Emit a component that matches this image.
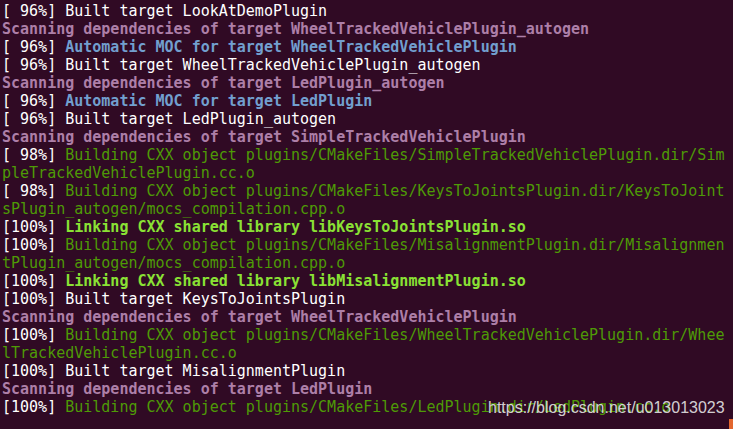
const W = "text-white";
const M = "text-[#ad7fa8] font-bold";
const B = "text-[#729fcf] font-bold";
const G = "text-[#4e9a06]";
const L = "text-[#8ae234] font-bold";

type Seg = [string, string];

const lines: Seg[][] = [
  [["[ 96%] Built target LookAtDemoPlugin", W]],
  [["Scanning dependencies of target WheelTrackedVehiclePlugin_autogen", M]],
  [["[ 96%] ", W], ["Automatic MOC for target WheelTrackedVehiclePlugin", B]],
  [["[ 96%] Built target WheelTrackedVehiclePlugin_autogen", W]],
  [["Scanning dependencies of target LedPlugin_autogen", M]],
  [["[ 96%] ", W], ["Automatic MOC for target LedPlugin", B]],
  [["[ 96%] Built target LedPlugin_autogen", W]],
  [["Scanning dependencies of target SimpleTrackedVehiclePlugin", M]],
  [["[ 98%] ", W], ["Building CXX object plugins/CMakeFiles/SimpleTrackedVehiclePlugin.dir/Sim", G]],
  [["pleTrackedVehiclePlugin.cc.o", G]],
  [["[ 98%] ", W], ["Building CXX object plugins/CMakeFiles/KeysToJointsPlugin.dir/KeysToJoint", G]],
  [["sPlugin_autogen/mocs_compilation.cpp.o", G]],
  [["[100%] ", W], ["Linking CXX shared library libKeysToJointsPlugin.so", L]],
  [["[100%] ", W], ["Building CXX object plugins/CMakeFiles/MisalignmentPlugin.dir/Misalignmen", G]],
  [["tPlugin_autogen/mocs_compilation.cpp.o", G]],
  [["[100%] ", W], ["Linking CXX shared library libMisalignmentPlugin.so", L]],
  [["[100%] Built target KeysToJointsPlugin", W]],
  [["Scanning dependencies of target WheelTrackedVehiclePlugin", M]],
  [["[100%] ", W], ["Building CXX object plugins/CMakeFiles/WheelTrackedVehiclePlugin.dir/Whee", G]],
  [["lTrackedVehiclePlugin.cc.o", G]],
  [["[100%] Built target MisalignmentPlugin", W]],
  [["Scanning dependencies of target LedPlugin", M]],
  [["[100%] ", W], ["Building CXX object plugins/CMakeFiles/LedPlugin.dir/LedPlugin.cc.o", G]],
];

export default function App() {
  return (
    <div className="relative w-[733px] h-[429px] overflow-hidden bg-[#300a24]">
      <div
        className="pt-[2px] pl-[2px] text-[15px] leading-[18px] whitespace-pre"
        style={{ fontFamily: '"DejaVu Sans Mono", monospace' }}
      >
        {lines.map((segs, i) => (
          <div key={i}>
            {segs.map(([t, c], j) => (
              <span key={j} className={c}>
                {t}
              </span>
            ))}
          </div>
        ))}
      </div>
      {/* csdn watermark */}
      <div
        className="absolute left-[488px] top-[398px] text-[16px] leading-[20px] text-[#e8e8e8]/90"
        style={{ fontFamily: '"Liberation Sans", Arial, sans-serif' }}
      >
        https://blog.csdn.net/u013013023
      </div>
      <div className="absolute right-0 bottom-0 w-[4px] h-[10px] bg-[#e2662e]" />
    </div>
  );
}
